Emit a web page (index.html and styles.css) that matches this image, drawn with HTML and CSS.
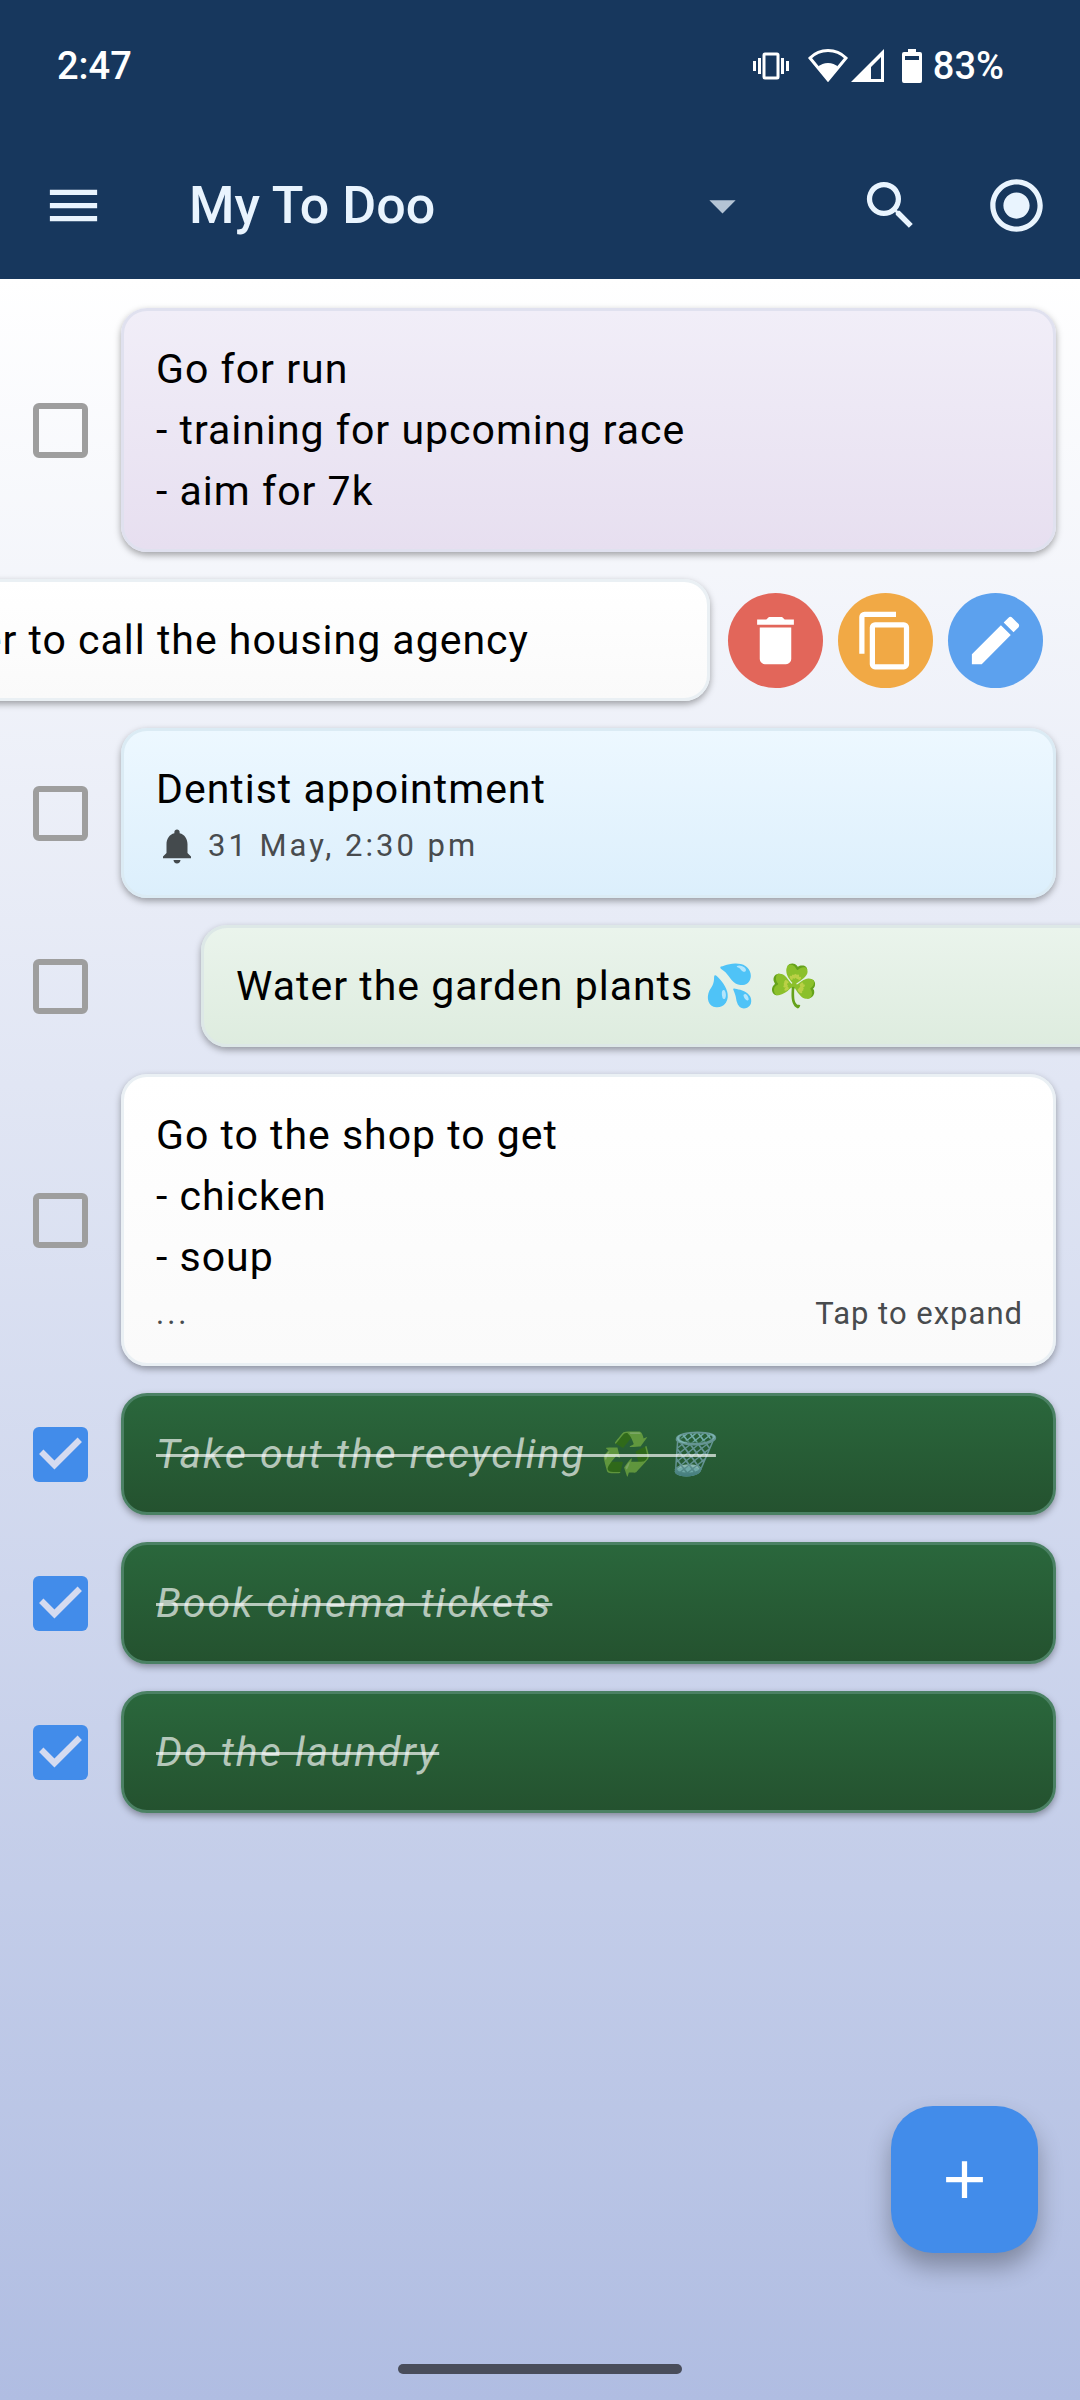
FILE: index.html
```html
<!DOCTYPE html>
<html lang="en">
<head>
<meta charset="utf-8">
<meta name="viewport" content="width=device-width, initial-scale=1">
<title>My To Doo</title>
<link rel="stylesheet" href="styles.css">
</head>
<body>
<div class="app">
  <header class="header">
    <div class="status">
      <span class="status-text">2:47</span>
      <div class="status-icons">
        <svg class="vibrate" width="38" height="34" viewBox="0 0 38 34" aria-hidden="true">
          <rect x="12" y="5" width="14" height="24" rx="1" fill="none" stroke="#fff" stroke-width="3"/>
          <path d="M7.500 9v16M30.500 9v16M2.500 12v10M35.500 12v10" stroke="#fff" stroke-width="3"/>
        </svg>
        <svg class="wifi" width="40" height="34" viewBox="0 0 40 34" aria-hidden="true">
          <path d="M2 9C12 -1 28 -1 38 9L20 31Z" fill="none" stroke="#fff" stroke-width="3"/>
          <path d="M10 18C15 12.500 25 12.500 30 18L20 31Z" fill="#fff"/>
        </svg>
        <svg class="signal" width="33" height="34" viewBox="0 0 33 34" aria-hidden="true">
          <path fill="#fff" fill-rule="evenodd" d="M0 33L33 0V33ZM20 18V30H30V8Z"/>
        </svg>
        <svg class="battery" width="20" height="34" viewBox="0 0 20 34" aria-hidden="true">
          <path fill="#fff" fill-rule="evenodd" d="M6 0h8v3h4a2 2 0 0 1 2 2v27a2 2 0 0 1-2 2H2a2 2 0 0 1-2-2V5a2 2 0 0 1 2-2h4zM3 7v4h14V7z"/>
        </svg>
        <span class="status-text">83%</span>
      </div>
    </div>
    <nav class="toolbar">
      <button class="icon-button" type="button" aria-label="Menu">
        <svg class="icon" viewBox="0 0 24 24"><path d="M3 6h18v2H3V6m0 5h18v2H3v-2m0 5h18v2H3v-2z"/></svg>
      </button>
      <button class="list-picker" type="button">
        <span>My To Doo</span>
        <svg class="icon caret" viewBox="0 0 24 24" aria-hidden="true"><path d="M7 10l5 5 5-5z"/></svg>
      </button>
      <button class="icon-button search" type="button" aria-label="Search">
        <svg class="icon" viewBox="0 0 24 24"><path d="M15.500 14h-.79l-.28-.27A6.470 6.470 0 0 0 16 9.500 6.500 6.500 0 1 0 9.500 16c1.610 0 3.090-.59 4.230-1.570l.27.28v.79l5 4.990L20.490 19l-4.990-5zm-6 0C7.010 14 5 11.990 5 9.500S7.010 5 9.500 5 14 7.010 14 9.500 11.990 14 9.500 14z"/></svg>
      </button>
      <button class="icon-button focus" type="button" aria-label="Focus">
        <svg class="icon" viewBox="0 0 24 24"><path d="M12 7c-2.760 0-5 2.240-5 5s2.240 5 5 5 5-2.240 5-5-2.240-5-5-5zm0-5C6.480 2 2 6.480 2 12s4.480 10 10 10 10-4.480 10-10S17.520 2 12 2zm0 18c-4.420 0-8-3.580-8-8s3.580-8 8-8 8 3.580 8 8-3.580 8-8 8z"/></svg>
      </button>
    </nav>
  </header>

  <main class="content">
    <ul class="tasks">
      <li class="task">
        <div class="check"><input class="box" type="checkbox" id="t1"></div>
        <div class="card lilac">
          <label class="text" for="t1">Go for run<br>- training for upcoming race<br>- aim for 7k</label>
        </div>
      </li>
      <li class="task swiped-left">
        <div class="card plain">
          <p class="text">Remember to call the housing agency</p>
        </div>
        <div class="actions">
          <button class="action delete" type="button" aria-label="Delete">
            <svg class="icon" viewBox="0 0 24 24"><path d="M19 4h-3.500l-1-1h-5l-1 1H5v2h14M6 19a2 2 0 0 0 2 2h8a2 2 0 0 0 2-2V7H6v12z"/></svg>
          </button>
          <button class="action copy" type="button" aria-label="Copy">
            <svg class="icon" viewBox="0 0 24 24"><path d="M19 21H8V7h11m0-2H8a2 2 0 0 0-2 2v14a2 2 0 0 0 2 2h11a2 2 0 0 0 2-2V7a2 2 0 0 0-2-2m-3-4H4a2 2 0 0 0-2 2v14h2V3h12V1z"/></svg>
          </button>
          <button class="action edit" type="button" aria-label="Edit">
            <svg class="icon" viewBox="0 0 24 24"><path d="M20.710 7.040c.39-.39.39-1.040 0-1.410l-2.340-2.340c-.37-.39-1.020-.39-1.410 0l-1.840 1.830 3.750 3.750M3 17.250V21h3.750L17.810 9.930l-3.750-3.750L3 17.250z"/></svg>
          </button>
        </div>
      </li>
      <li class="task">
        <div class="check"><input class="box" type="checkbox" id="t3"></div>
        <div class="card sky">
          <label class="text" for="t3">Dentist appointment</label>
          <div class="meta reminder">
            <svg class="bell" viewBox="0 0 24 24" aria-hidden="true"><path d="M12 22c1.100 0 2-.9 2-2h-4c0 1.100.89 2 2 2zm6-6v-5c0-3.070-1.640-5.640-4.500-6.320V4c0-.83-.67-1.500-1.500-1.500s-1.500.67-1.500 1.500v.68C7.630 5.360 6 7.920 6 11v5l-2 2v1h16v-1l-2-2z"/></svg>
            <time>31 May, 2:30 pm</time>
          </div>
        </div>
      </li>
      <li class="task swiped-right">
        <div class="check"><input class="box" type="checkbox" id="t4"></div>
        <div class="card mint">
          <label class="text" for="t4">Water the garden plants 💦 ☘️</label>
        </div>
      </li>
      <li class="task">
        <div class="check"><input class="box" type="checkbox" id="t5"></div>
        <div class="card plain">
          <label class="text" for="t5">Go to the shop to get<br>- chicken<br>- soup</label>
          <div class="meta more">
            <span class="dots">...</span>
            <button class="expand" type="button">Tap to expand</button>
          </div>
        </div>
      </li>
      <li class="task">
        <div class="check"><input class="box" type="checkbox" id="t6" checked></div>
        <div class="card done">
          <label class="text" for="t6">Take out the recycling ♻️ 🗑️</label>
        </div>
      </li>
      <li class="task">
        <div class="check"><input class="box" type="checkbox" id="t7" checked></div>
        <div class="card done">
          <label class="text" for="t7">Book cinema tickets</label>
        </div>
      </li>
      <li class="task">
        <div class="check"><input class="box" type="checkbox" id="t8" checked></div>
        <div class="card done">
          <label class="text" for="t8">Do the laundry</label>
        </div>
      </li>
    </ul>
  </main>

  <button class="fab" type="button" aria-label="Add task">
    <svg class="icon" viewBox="0 0 24 24"><path d="M19 13h-6v6h-2v-6H5v-2h6V5h2v6h6v2z"/></svg>
  </button>
  <footer class="gesture-bar"><span class="handle"></span></footer>
</div>
</body>
</html>
```

FILE: styles.css
```css
* {
  box-sizing: border-box;
}

body {
  margin: 0;
  font-family: Roboto, "Noto Sans", sans-serif;
  color: #000;
}

button {
  margin: 0;
  padding: 0;
  border: 0;
  background: none;
  color: inherit;
  font: inherit;
}

.app {
  position: relative;
  display: flex;
  flex-direction: column;
  min-height: 100vh;
  overflow: hidden;
}

.icon {
  display: block;
  width: 63px;
  height: 63px;
  fill: currentColor;
}

/* Header */
.header {
  background: #17375d;
  color: #e9f4fe;
}

.status {
  display: flex;
  align-items: center;
  justify-content: space-between;
  height: 132px;
  padding: 0 76px 0 57px;
  color: #fff;
}

.status-text {
  font-size: 38px;
  font-weight: 500;
  line-height: 42px;
}

.status-icons {
  display: flex;
  align-items: center;
}

.wifi {
  margin-left: 18px;
}

.signal {
  margin-left: 3px;
}

.battery {
  margin: 0 11px 0 18px;
}

.toolbar {
  display: flex;
  align-items: center;
  height: 147px;
  padding: 0 32px 0 42px;
}

.list-picker {
  display: flex;
  flex: 1;
  align-items: center;
  justify-content: space-between;
  margin-left: 84px;
  font-size: 52px;
  font-weight: 500;
  line-height: 64px;
}

.caret {
  opacity: 0.75;
}

.search {
  margin-left: 105px;
}

.focus {
  margin-left: 63px;
}

/* Task list */
.content {
  flex: 1;
  background: linear-gradient(#fff, #b0bde2);
}

.tasks {
  display: flex;
  flex-direction: column;
  gap: 27px;
  margin: 0;
  padding: 29px 24px 240px 0;
  list-style: none;
}

.task {
  display: flex;
  align-items: center;
}

.check {
  display: flex;
  flex: none;
  justify-content: center;
  width: 121px;
}

.box {
  width: 55px;
  height: 55px;
  margin: 0;
  border: 6px solid #9e9e9e;
  border-radius: 6px;
  appearance: none;
}

.box:checked {
  border: 0;
  background: #428cea;
}

.box:checked::before {
  display: block;
  width: 100%;
  height: 100%;
  background: #d5dbf0;
  clip-path: polygon(11% 50%, 19% 42%, 39% 62%, 81% 20%, 89% 28%, 39% 78%);
  content: "";
}

.card {
  flex: 1;
  padding: 28px 30px 27px 32px;
  border: 3px solid;
  border-radius: 26px;
  box-shadow: 0 3px 7px rgba(0, 0, 0, 0.35);
}

.text {
  display: block;
  margin: 0;
  font-size: 41px;
  letter-spacing: 1px;
  line-height: 61px;
  white-space: nowrap;
}

.lilac {
  border-color: #e0e1ef;
  background: linear-gradient(#f1eef8, #e7dff0);
}

.plain {
  border-color: #eaf0f4;
  background: linear-gradient(#fff, #fafafa);
}

.sky {
  border-color: #dbebf4;
  background: linear-gradient(#edf8ff, #dceffc);
}

.mint {
  border-color: #dde8e7;
  background: linear-gradient(#eaf4ec, #deecdf);
}

.done {
  border-color: #4b8164;
  background: linear-gradient(#2a673c, #24522f);
  color: rgba(255, 255, 255, 0.67);
  font-style: italic;
}

.done .text {
  letter-spacing: 2px;
  text-decoration: line-through 3px;
  text-decoration-skip-ink: none;
}

.meta {
  display: flex;
  align-items: center;
  height: 48px;
  padding-top: 4px;
  color: #484b4e;
  font-size: 31px;
  line-height: 44px;
}

.reminder {
  gap: 10px;
  letter-spacing: 3px;
}

.bell {
  width: 42px;
  height: 42px;
  fill: #444a4d;
}

.more {
  justify-content: space-between;
}

.dots {
  letter-spacing: 3px;
}

.expand {
  letter-spacing: 1px;
}

/* Swiped rows keep the card at its full width and let it run off the edge */
.swiped-left,
.swiped-right {
  margin-right: -24px;
}

.swiped-left .card,
.swiped-right .card {
  flex: none;
  width: calc(100% - 145px);
}

.swiped-left {
  justify-content: flex-end;
}

.swiped-right .card {
  margin-left: 80px;
}

.actions {
  display: flex;
  flex: none;
  gap: 15px;
  padding: 0 37px 0 18px;
}

.action {
  display: grid;
  place-items: center;
  width: 95px;
  height: 95px;
  border-radius: 50%;
  color: #fff;
}

.delete {
  background: #e2665a;
}

.copy {
  background: #f1a945;
}

.edit {
  background: #5ca1ee;
}

/* Floating add button and gesture bar */
.fab {
  position: absolute;
  right: 42px;
  bottom: 147px;
  display: grid;
  place-items: center;
  width: 147px;
  height: 147px;
  border-radius: 42px;
  background: #428cea;
  color: #fff;
  box-shadow: 0 14px 24px rgba(0, 0, 0, 0.3);
}

.gesture-bar {
  position: absolute;
  right: 0;
  bottom: 26px;
  left: 0;
  display: flex;
  justify-content: center;
}

.handle {
  width: 284px;
  height: 10px;
  border-radius: 5px;
  background: #494d5b;
}
```
